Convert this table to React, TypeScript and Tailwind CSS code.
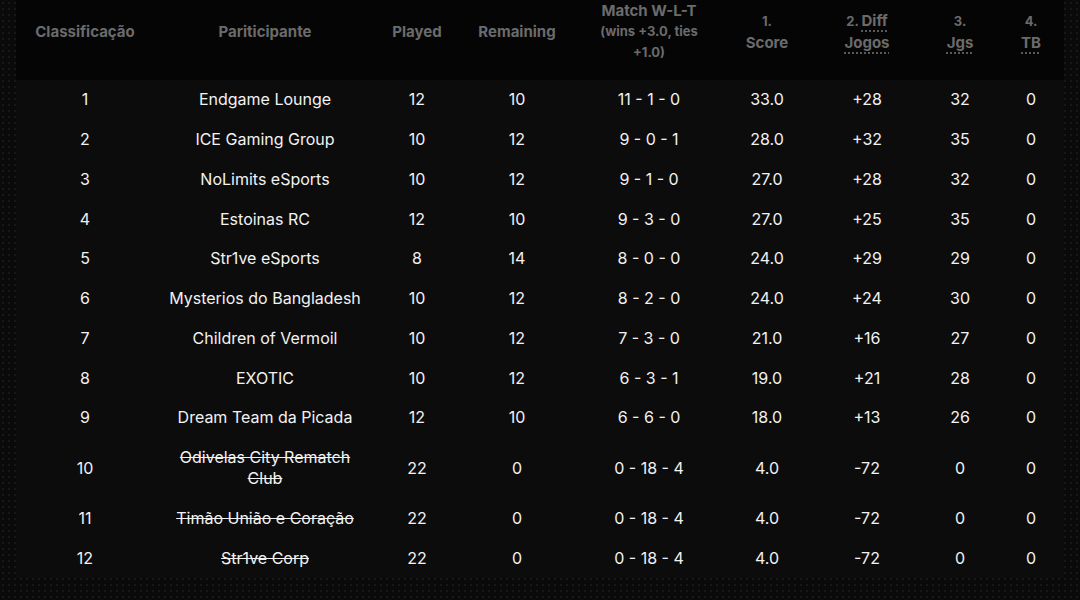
type Row = {
  pos: number;
  name: string;
  played: number;
  remaining: number;
  wlt: string;
  score: string;
  diff: string;
  jgs: number;
  tb: number;
  out?: boolean;
};

const rows: Row[] = [
  { pos: 1, name: "Endgame Lounge", played: 12, remaining: 10, wlt: "11 - 1 - 0", score: "33.0", diff: "+28", jgs: 32, tb: 0 },
  { pos: 2, name: "ICE Gaming Group", played: 10, remaining: 12, wlt: "9 - 0 - 1", score: "28.0", diff: "+32", jgs: 35, tb: 0 },
  { pos: 3, name: "NoLimits eSports", played: 10, remaining: 12, wlt: "9 - 1 - 0", score: "27.0", diff: "+28", jgs: 32, tb: 0 },
  { pos: 4, name: "Estoinas RC", played: 12, remaining: 10, wlt: "9 - 3 - 0", score: "27.0", diff: "+25", jgs: 35, tb: 0 },
  { pos: 5, name: "Str1ve eSports", played: 8, remaining: 14, wlt: "8 - 0 - 0", score: "24.0", diff: "+29", jgs: 29, tb: 0 },
  { pos: 6, name: "Mysterios do Bangladesh", played: 10, remaining: 12, wlt: "8 - 2 - 0", score: "24.0", diff: "+24", jgs: 30, tb: 0 },
  { pos: 7, name: "Children of Vermoil", played: 10, remaining: 12, wlt: "7 - 3 - 0", score: "21.0", diff: "+16", jgs: 27, tb: 0 },
  { pos: 8, name: "EXOTIC", played: 10, remaining: 12, wlt: "6 - 3 - 1", score: "19.0", diff: "+21", jgs: 28, tb: 0 },
  { pos: 9, name: "Dream Team da Picada", played: 12, remaining: 10, wlt: "6 - 6 - 0", score: "18.0", diff: "+13", jgs: 26, tb: 0 },
  { pos: 10, name: "Odivelas City Rematch Club", played: 22, remaining: 0, wlt: "0 - 18 - 4", score: "4.0", diff: "-72", jgs: 0, tb: 0, out: true },
  { pos: 11, name: "Timão União e Coração", played: 22, remaining: 0, wlt: "0 - 18 - 4", score: "4.0", diff: "-72", jgs: 0, tb: 0, out: true },
  { pos: 12, name: "Str1ve Corp", played: 22, remaining: 0, wlt: "0 - 18 - 4", score: "4.0", diff: "-72", jgs: 0, tb: 0, out: true },
];

const abbr = "underline decoration-dotted decoration-[#777] underline-offset-[5px]";

function Th({ children }: { children: React.ReactNode }) {
  return (
    <th className="h-[80px] px-4 pb-[17px] text-center align-middle text-[15px] font-bold leading-[21px] text-[#6b6b6b]">
      {children}
    </th>
  );
}

const td = "px-2 py-[9.38px] text-center";

export default function App() {
  return (
    <div
      className="min-h-screen w-full bg-[#0a0a0a] bg-[radial-gradient(#181818_1px,transparent_1.2px)] bg-[size:6px_6px] px-4 text-white"
      style={{ fontFamily: "Inter, 'Noto Sans', sans-serif" }}
    >
      <table className="w-full table-fixed border-collapse">
        <colgroup>
          <col className="w-[138px]" />
          <col className="w-[222px]" />
          <col className="w-[82px]" />
          <col className="w-[118px]" />
          <col className="w-[146px]" />
          <col className="w-[90px]" />
          <col className="w-[110px]" />
          <col className="w-[76px]" />
          <col className="w-[66px]" />
        </colgroup>
        <thead className="bg-[#050505]">
          <tr>
            <Th>Classificação</Th>
            <Th>Pariticipante</Th>
            <Th>Played</Th>
            <Th>Remaining</Th>
            <Th>
              <div>Match W-L-T</div>
              <div className="text-[13px] leading-[21px]">(wins +3.0, ties +1.0)</div>
            </Th>
            <Th>
              <div className="text-[13px]">1.</div>
              <div>Score</div>
            </Th>
            <Th>
              <div>
                <span className="text-[13px]">2. </span>
                <span className={abbr}>Diff</span>
              </div>
              <div>
                <span className={abbr}>Jogos</span>
              </div>
            </Th>
            <Th>
              <div className="text-[13px]">3.</div>
              <div>
                <span className={abbr}>Jgs</span>
              </div>
            </Th>
            <Th>
              <div className="text-[13px]">4.</div>
              <div>
                <span className={abbr}>TB</span>
              </div>
            </Th>
          </tr>
        </thead>
        <tbody className="bg-[#0c0c0c] text-[16px] leading-[21px] text-[#f2f2f2]">
          {rows.map((r) => (
            <tr key={r.pos}>
              <td className={td}>{r.pos}</td>
              <td className={`px-3 py-[9.38px] text-center ${r.out ? "line-through" : ""}`}>{r.name}</td>
              <td className={td}>{r.played}</td>
              <td className={td}>{r.remaining}</td>
              <td className={td}>{r.wlt}</td>
              <td className={td}>{r.score}</td>
              <td className={td}>{r.diff}</td>
              <td className={td}>{r.jgs}</td>
              <td className={td}>{r.tb}</td>
            </tr>
          ))}
        </tbody>
      </table>
    </div>
  );
}
